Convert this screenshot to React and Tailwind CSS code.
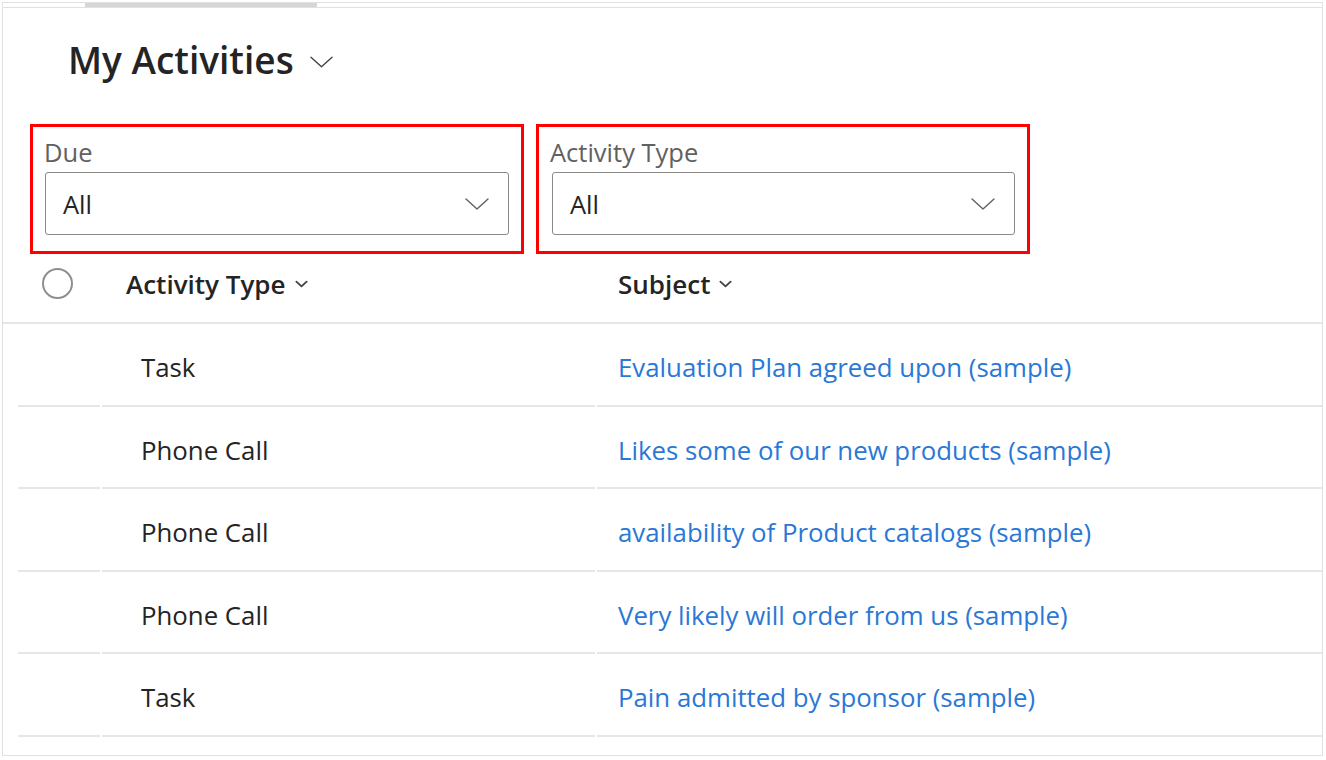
import React from 'react'

const FONT = { fontFamily: '"Open Sans", "Noto Sans", sans-serif' }

const ROWS = [
  { type: 'Task', subject: 'Evaluation Plan agreed upon (sample)', h: 'h-[83px]' },
  { type: 'Phone Call', subject: 'Likes some of our new products (sample)', h: 'h-[82px]' },
  { type: 'Phone Call', subject: 'availability of Product catalogs (sample)', h: 'h-[83px]' },
  { type: 'Phone Call', subject: 'Very likely will order from us (sample)', h: 'h-[82px]' },
  { type: 'Task', subject: 'Pain admitted by sponsor (sample)', h: 'h-[83px]' },
]

function Chevron({ className, stroke = 1.4 }) {
  return (
    <svg viewBox="0 0 24 12" className={className} fill="none" stroke="currentColor" strokeWidth={stroke} strokeLinecap="round" strokeLinejoin="round">
      <path d="M1 1 L12 11 L23 1" />
    </svg>
  )
}

function SmallChevron({ className }) {
  return (
    <svg viewBox="0 0 14 8" className={className} fill="none" stroke="currentColor" strokeWidth="2" strokeLinecap="round" strokeLinejoin="round">
      <path d="M1.5 1.5 L7 6.5 L12.5 1.5" />
    </svg>
  )
}

function Filter({ label, boxPad }) {
  return (
    <div className="w-[494px] h-[130px] border-[3px] border-[#ff0000] flex flex-col">
      <div className="pt-[8px] pl-[11px] text-[25.5px] leading-[34px] text-[#616161]">{label}</div>
      <div className={`mt-[3px] ${boxPad}`}>
        <div className="h-[63px] border border-[#8a8a8a] rounded-[3px] flex items-center justify-between pl-[17px] pr-[19px]">
          <span className="text-[25.5px] text-[#242424] pt-[2px]">All</span>
          <Chevron className="w-[24px] h-[12px] text-[#616161]" />
        </div>
      </div>
    </div>
  )
}

export default function App() {
  return (
    <div className="w-[1326px] h-[760px] bg-white" style={FONT}>
      <div className="mt-[2px] ml-[2px] w-[1321px] h-[754px] border border-[#e1e1e1] flex flex-col">
        <div className="h-[5px] border-b border-[#e1e1e1]">
          <div className="ml-[82px] w-[232px] h-full bg-[#d6d6d6]" />
        </div>

        <div className="mt-[30px] pl-[65px] flex items-center gap-[16px]">
          <h1 className="text-[37px] leading-[44px] font-semibold text-[#242424]">My Activities</h1>
          <Chevron className="w-[23px] h-[12px] text-[#424242] mt-[4px]" />
        </div>

        <div className="mt-[42px] pl-[27px] flex gap-[12px]">
          <Filter label="Due" boxPad="px-[12px]" />
          <Filter label="Activity Type" boxPad="pl-[13px] pr-[12px]" />
        </div>

        <div className="h-[70px] border-b-2 border-[#e6e6e6] flex items-start pt-[12px]">
          <div className="w-[99px] pl-[39px] pt-[2px]">
            <div className="w-[31px] h-[31px] rounded-full border-2 border-[#8f8f8f]" />
          </div>
          <div className="w-[495px] pl-[24px] flex items-center gap-[9px] text-[26px] leading-[36px] font-semibold text-[#242424]">
            Activity Type
            <SmallChevron className="w-[13px] h-[8px] text-[#424242]" />
          </div>
          <div className="flex-1 pl-[21px] flex items-center gap-[9px] text-[26px] leading-[36px] font-semibold text-[#242424]">
            Subject
            <SmallChevron className="w-[13px] h-[8px] text-[#424242]" />
          </div>
        </div>

        <div className="ml-[15px]">
          {ROWS.map((r, i) => (
            <div key={i} className={`${r.h} flex gap-[2px]`}>
              <div className="w-[82px] border-b-2 border-[#e6e6e6]" />
              <div className="w-[493px] border-b-2 border-[#e6e6e6] flex items-center pl-[39px] pt-[6px] text-[25.8px] text-[#242424]">
                {r.type}
              </div>
              <div className="flex-1 border-b-2 border-[#e6e6e6] flex items-center pl-[21px] pt-[6px] text-[25.8px] text-[#2a78d6]">
                {r.subject}
              </div>
            </div>
          ))}
        </div>
      </div>
    </div>
  )
}
